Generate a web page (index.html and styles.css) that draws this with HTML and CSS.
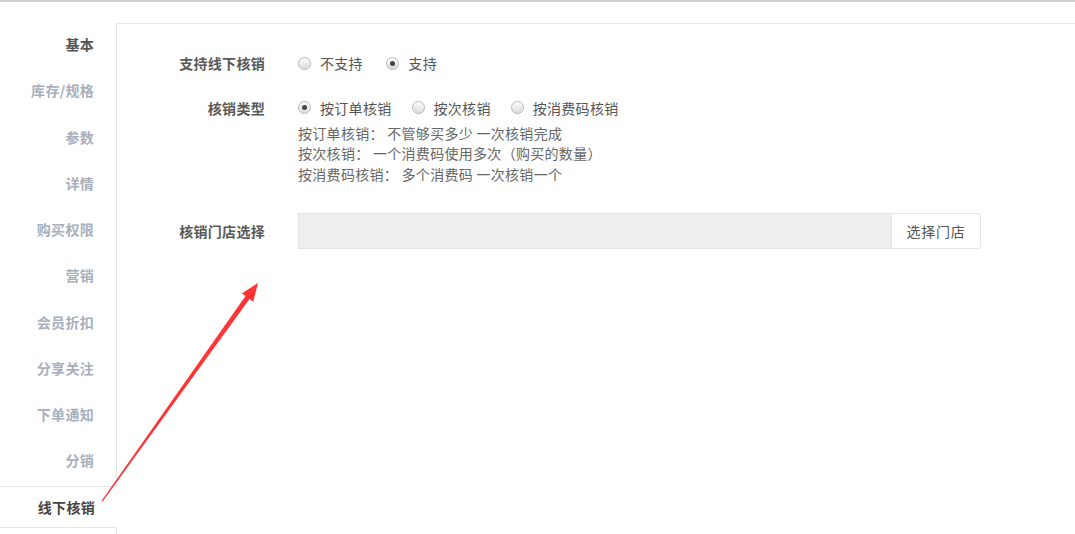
FILE: index.html
```html
<!DOCTYPE html>
<html lang="zh-CN">
<head>
<meta charset="utf-8">
<title>线下核销</title>
<link rel="stylesheet" href="styles.css">
</head>
<body>
<div class="page">
  <div class="layout">
    <ul class="sidenav">
      <li class="nav-item nav-dark">基本</li>
      <li class="nav-item">库存/规格</li>
      <li class="nav-item">参数</li>
      <li class="nav-item">详情</li>
      <li class="nav-item">购买权限</li>
      <li class="nav-item">营销</li>
      <li class="nav-item">会员折扣</li>
      <li class="nav-item">分享关注</li>
      <li class="nav-item">下单通知</li>
      <li class="nav-item">分销</li>
      <li class="nav-item nav-active">线下核销</li>
    </ul>
    <div class="panel">
      <div class="form-row row-support">
        <div class="form-label">支持线下核销</div>
        <div class="form-control">
          <label class="radio"><span class="radio-dot"></span>不支持</label>
          <label class="radio"><span class="radio-dot checked"></span>支持</label>
        </div>
      </div>
      <div class="form-row row-type">
        <div class="form-label">核销类型</div>
        <div class="form-control">
          <div class="radio-line">
            <label class="radio"><span class="radio-dot checked"></span>按订单核销</label>
            <label class="radio"><span class="radio-dot"></span>按次核销</label>
            <label class="radio"><span class="radio-dot"></span>按消费码核销</label>
          </div>
          <div class="help">
            <div>按订单核销： 不管够买多少 一次核销完成</div>
            <div>按次核销： 一个消费码使用多次（购买的数量）</div>
            <div>按消费码核销： 多个消费码 一次核销一个</div>
          </div>
        </div>
      </div>
      <div class="form-row row-store">
        <div class="form-label">核销门店选择</div>
        <div class="form-control">
          <div class="input-group">
            <div class="input-fake"></div>
            <button class="btn-select">选择门店</button>
          </div>
        </div>
      </div>
    </div>
  </div>
  <svg class="annotation" width="1075" height="534" viewBox="0 0 1075 534">
    <polygon fill="#f33" points="101.6,500.7 245.5,296.1 241.8,293.5 258,283 253.2,301.7 249.5,299.1 102.6,501.4"/>
  </svg>
</div>
</body>
</html>
```
FILE: styles.css
```css
* { box-sizing: border-box; }
html, body { margin: 0; padding: 0; background: #fff; }
body {
  font-family: "Noto Sans CJK SC", "Microsoft YaHei", "Liberation Sans", sans-serif;
  font-size: 14px;
  letter-spacing: 0.3px;
  color: #555;
}
.page {
  position: relative;
  width: 1075px;
  height: 534px;
  overflow: hidden;
  border-top: 2px solid #d2d2d2;
}
.layout {
  display: flex;
  align-items: flex-start;
  height: 100%;
}
.sidenav {
  list-style: none;
  margin: 0;
  padding: 21px 0 0 0;
  width: 116px;
  flex: none;
  position: relative;
  z-index: 2;
}
.nav-item {
  height: 42px;
  margin-bottom: 4.25px;
  line-height: 40px;
  border-top: 1px solid transparent;
  border-bottom: 1px solid transparent;
  text-align: right;
  padding-right: 22px;
  font-weight: bold;
  font-size: 14px;
  color: #a7afbc;
}
.nav-dark { color: #555; }
.nav-active {
  color: #444;
  background: #fff;
  width: 117px;
  border-top-color: #e6e6e6;
  border-bottom-color: #e6e6e6;
}
.panel {
  flex: 1;
  margin-top: 21px;
  height: 600px;
  border-top: 1px solid #e8e8e8;
  border-left: 1px solid #e3e5ec;
  padding-top: 29px;
}
.form-row {
  display: grid;
  grid-template-columns: 148px 1fr;
  column-gap: 33px;
}
.form-label {
  text-align: right;
  font-weight: bold;
  color: #595959;
  line-height: 20px;
}
.row-type { margin-top: 24px; }
.row-store { margin-top: 29px; }
.row-store .form-label { line-height: 36px; }
.form-control { line-height: 20px; }
.radio-line { display: flex; }
.radio {
  display: inline-flex;
  align-items: center;
  margin-right: 20px;
  color: #555;
  line-height: 20px;
}
.radio-dot {
  width: 13px;
  height: 13px;
  border-radius: 50%;
  border: 1px solid #b8b8b8;
  background: linear-gradient(#fdfdfd, #dcdcdc);
  margin-right: 9px;
  position: relative;
  flex: none;
}
.radio-dot.checked::after {
  content: "";
  position: absolute;
  left: 3px;
  top: 3px;
  width: 5px;
  height: 5px;
  border-radius: 50%;
  background: #444;
}
.help {
  margin-top: 5px;
  font-size: 14px;
  line-height: 20.5px;
  color: #666;
}
.input-group {
  display: flex;
  width: 683px;
  height: 36px;
}
.input-fake {
  flex: 1;
  background: #eee;
  border: 1px solid #e3e3e3;
  border-right: none;
}
.btn-select {
  width: 90px;
  height: 36px;
  background: #fff;
  border: 1px solid #e3e3e3;
  border-radius: 0 3px 3px 0;
  font-family: inherit;
  font-size: 14px;
  letter-spacing: 0.8px;
  color: #555;
  padding: 0;
}
.annotation {
  position: absolute;
  left: 0;
  top: -2px;
  pointer-events: none;
  z-index: 5;
}
```
